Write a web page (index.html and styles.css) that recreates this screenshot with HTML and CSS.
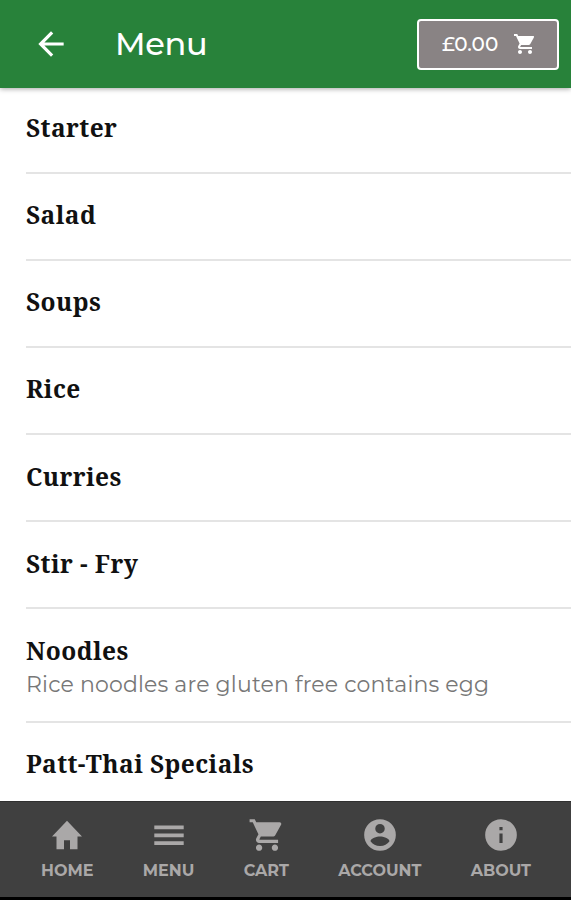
FILE: index.html
```html
<!DOCTYPE html>
<html lang="en">
<head>
    <meta charset="UTF-8">
    <meta name="viewport" content="width=device-width, initial-scale=1.0">
    <title>Menu</title>
    <link rel="stylesheet" href="styles.css">
</head>
<body>
    <div class="app">
        <!-- Top bar -->
        <header class="topbar">
            <svg class="back" viewBox="0 0 24 24"><path d="M20 11H7.83l5.59-5.59L12 4l-8 8 8 8 1.41-1.41L7.83 13H20v-2z"/></svg>
            <h1>Menu</h1>
            <button class="basket">
                <span>£0.00</span>
                <svg viewBox="0 0 24 24"><path d="M7 18c-1.1 0-1.99.9-1.99 2S5.9 22 7 22s2-.9 2-2-.9-2-2-2zM1 2v2h2l3.6 7.59-1.35 2.45c-.16.28-.25.61-.25.96 0 1.1.9 2 2 2h12v-2H7.42c-.14 0-.25-.11-.25-.25l.03-.12.9-1.63h7.45c.75 0 1.41-.41 1.75-1.03l3.58-6.49A1 1 0 0 0 20 4H5.21l-.94-2H1zm16 16c-1.1 0-1.99.9-1.99 2s.89 2 1.99 2 2-.9 2-2-.9-2-2-2z"/></svg>
            </button>
        </header>

        <!-- Menu categories -->
        <ul class="categories">
            <li><h2>Starter</h2></li>
            <li><h2>Salad</h2></li>
            <li><h2>Soups</h2></li>
            <li><h2>Rice</h2></li>
            <li><h2>Curries</h2></li>
            <li><h2>Stir - Fry</h2></li>
            <li class="with-note">
                <h2>Noodles</h2>
                <p>Rice noodles are gluten free contains egg</p>
            </li>
            <li><h2>Patt-Thai Specials</h2></li>
        </ul>

        <!-- Bottom navigation -->
        <nav class="tabs">
            <a class="home">
                <svg viewBox="0 0 24 24"><path d="M10 21.500v-6h4v6h5v-8.500h3L12 2.500 2 13h3v8.500z"/></svg>
                <span>HOME</span>
            </a>
            <a class="menu">
                <svg viewBox="0 0 24 24"><path d="M2.200 5.700h19.600v2.500H2.200zM2.200 10.950h19.600v2.500H2.200zM2.200 16.200h19.600v2.500H2.200z"/></svg>
                <span>MENU</span>
            </a>
            <a class="cart">
                <svg viewBox="0 0 24 24"><path d="M7 18c-1.1 0-1.99.9-1.99 2S5.9 22 7 22s2-.9 2-2-.9-2-2-2zM1 2v2h2l3.6 7.59-1.35 2.45c-.16.28-.25.61-.25.96 0 1.1.9 2 2 2h12v-2H7.42c-.14 0-.25-.11-.25-.25l.03-.12.9-1.63h7.45c.75 0 1.41-.41 1.75-1.03l3.58-6.49A1 1 0 0 0 20 4H5.21l-.94-2H1zm16 16c-1.1 0-1.99.9-1.99 2s.89 2 1.99 2 2-.9 2-2-.9-2-2-2z"/></svg>
                <span>CART</span>
            </a>
            <a class="account">
                <svg viewBox="0 0 24 24"><path fill-rule="evenodd" d="M12 2a10 10 0 1 0 0 20 10 10 0 0 0 0-20zm0 3a3 3 0 1 1 0 6 3 3 0 0 1 0-6zm0 14c-2.500 0-4.710-1.180-6-3.020.03-1.990 4-3.080 6-3.080s5.970 1.090 6 3.080a7.200 7.200 0 0 1-6 3.020z"/></svg>
                <span>ACCOUNT</span>
            </a>
            <a class="about">
                <svg viewBox="0 0 24 24"><path fill-rule="evenodd" d="M12 2a10 10 0 1 0 0 20 10 10 0 0 0 0-20zm1 15h-2v-6h2v6zm0-8h-2V7h2v2z"/></svg>
                <span>ABOUT</span>
            </a>
        </nav>
    </div>
</body>
</html>
```
FILE: styles.css
```css
body {
    margin: 0;
    background-color: #fff;
    font-family: Montserrat, Inter, sans-serif;
}

h1, h2, p, ul {
    margin: 0;
    padding: 0;
}

.app {
    display: flex;
    flex-direction: column;
    height: 900px;
    overflow: hidden;
}

.topbar {
    box-sizing: border-box;
    display: flex;
    align-items: center;
    flex: none;
    height: 88px;
    padding: 0 12px 0 32px;
    background-color: #28823a;
    color: #fff;
    box-shadow: 0 1px 5px rgba(0, 0, 0, 0.35);
    z-index: 1;
}

.topbar svg {
    fill: #fff;
}

.back {
    width: 38px;
    height: 38px;
}

.topbar h1 {
    margin-left: 45px;
    padding-bottom: 1px;
    font-size: 32px;
    font-weight: 500;
    letter-spacing: -0.3px;
}

.basket {
    box-sizing: border-box;
    display: flex;
    align-items: center;
    justify-content: space-between;
    width: 142px;
    height: 51px;
    margin-left: auto;
    padding: 0 20px 0 23px;
    border: 2px solid #fff;
    border-radius: 4px;
    background-color: #898384;
    color: #fff;
    font: 500 20px Montserrat, Inter, sans-serif;
}

.basket svg {
    width: 24px;
    height: 24px;
}

.categories {
    flex: 1;
    min-height: 0;
    overflow: hidden;
    list-style: none;
}

.categories li {
    box-sizing: border-box;
    height: 87.2px;
    margin-left: 26px;
    padding-top: 24.5px;
    border-bottom: 2px solid #e4e4e4;
}

.categories li:first-child {
    height: 85.5px;
    padding-top: 22.5px;
}

.categories .with-note {
    height: 113.5px;
}

.categories h2 {
    color: #111;
    font: bold 24.5px/34px "Noto Serif", "Droid Serif", "DejaVu Serif", serif;
    letter-spacing: 0.42px;
    white-space: nowrap;
}

.categories p {
    color: #777;
    font-size: 22px;
    font-weight: 400;
    line-height: 33px;
    letter-spacing: 0.17px;
    white-space: nowrap;
}

.tabs {
    box-sizing: border-box;
    display: flex;
    justify-content: space-between;
    flex: none;
    height: 99px;
    padding: 14px 40px 0 41px;
    border-top: 1px solid #303030;
    border-bottom: 3px solid #000;
    background-color: #404040;
    color: #aaa8a8;
}

.tabs a {
    display: flex;
    flex-direction: column;
    align-items: center;
}

.tabs svg {
    width: 38px;
    height: 38px;
    fill: #aaa8a8;
}

.tabs .home svg,
.tabs .menu svg {
    width: 36px;
    height: 36px;
    margin: 1px;
}

.tabs .cart svg {
    margin-left: 2px;
}

.tabs span {
    font-size: 16px;
    font-weight: 700;
    line-height: 34px;
}
```
